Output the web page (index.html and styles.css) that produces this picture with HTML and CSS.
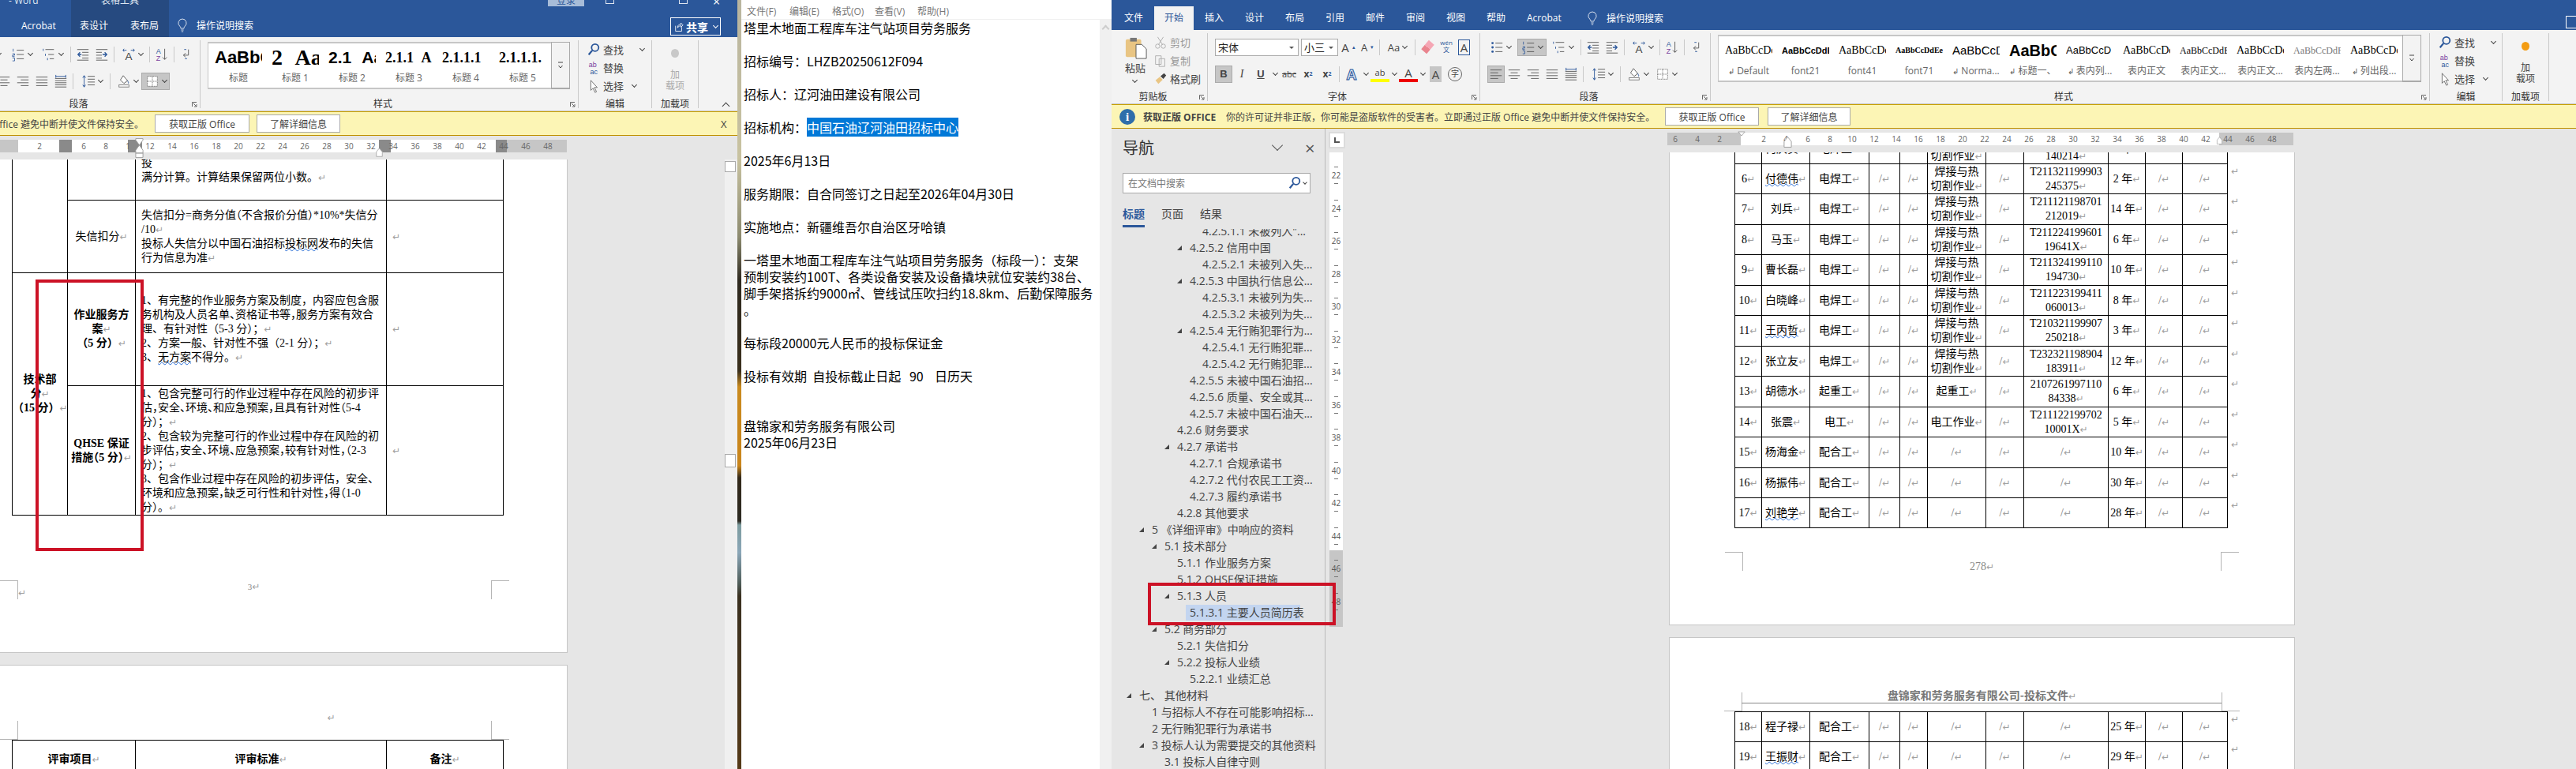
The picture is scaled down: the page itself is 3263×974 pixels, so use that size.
FILE: index.html
```html
<!DOCTYPE html>
<html lang="zh-CN">
<head>
<meta charset="utf-8">
<title>Word 与记事本</title>
<link rel="stylesheet" href="styles.css">
</head>
<body>

<svg class="sprite" xmlns="http://www.w3.org/2000/svg">
  <symbol id="i-bullets" viewBox="0 0 20 20"><g fill="#2b579a"><circle cx="4" cy="4" r="1.6"/><circle cx="4" cy="10" r="1.6"/><circle cx="4" cy="16" r="1.6"/></g><path d="M8 4h10M8 10h10M8 16h10" stroke="#555"/></symbol>
  <symbol id="i-number" viewBox="0 0 20 20"><path d="M3 2v4M2 9h3v2H2v2h3M2 15h3v4H2" stroke="#2b579a" fill="none" stroke-width=".9"/><path d="M8 4h10M8 10h10M8 16h10" stroke="#555"/></symbol>
  <symbol id="i-multi" viewBox="0 0 20 20"><path d="M2 2v3M5 9v3M8 15v3" stroke="#2b579a"/><path d="M5 3h12M9 10h8M11 16h6" stroke="#555"/></symbol>
  <symbol id="i-outdent" viewBox="0 0 20 20"><path d="M2 3h16M9 7h9M9 11h9M9 15h9M2 18h16" stroke="#555"/><path d="M8 10H3m3-3-3 3 3 3" stroke="#2b579a" stroke-width="1.4" fill="none"/></symbol>
  <symbol id="i-indent" viewBox="0 0 20 20"><path d="M2 3h16M2 7h8M2 11h8M2 15h8M2 18h16" stroke="#555"/><path d="M11 10h6m-3-3 3 3-3 3" stroke="#2b579a" stroke-width="1.4" fill="none"/></symbol>
  <symbol id="i-cna" viewBox="0 0 20 20"><text x="10" y="18" text-anchor="middle" font-size="15" font-family="Liberation Sans" fill="#444">A</text><path d="M2 4h5M3.500 2 2 4l1.500 2M18 4h-5m3.500-2L18 4l-1.500 2" stroke="#2b579a" fill="none"/></symbol>
  <symbol id="i-sort" viewBox="0 0 20 20"><text x="2" y="9" font-size="10" font-family="Liberation Sans" fill="#2b579a">A</text><text x="2" y="19" font-size="10" font-family="Liberation Sans" fill="#7a3fa0">Z</text><path d="M14 2v15m-3-3 3 3 3-3" stroke="#555" fill="none"/></symbol>
  <symbol id="i-para" viewBox="0 0 20 20"><path d="M13 3v8H6m3-3-3 3 3 3" stroke="#555" fill="none"/><path d="M7 3h3M11 16h-3" stroke="#2b579a"/></symbol>
  <symbol id="i-left" viewBox="0 0 20 20"><path d="M2 4h16M2 8h11M2 12h16M2 16h11" stroke="#555"/></symbol>
  <symbol id="i-center" viewBox="0 0 20 20"><path d="M2 4h16M5 8h10M2 12h16M5 16h10" stroke="#555"/></symbol>
  <symbol id="i-right" viewBox="0 0 20 20"><path d="M2 4h16M7 8h11M2 12h16M7 16h11" stroke="#555"/></symbol>
  <symbol id="i-just" viewBox="0 0 20 20"><path d="M2 4h16M2 8h16M2 12h16M2 16h16" stroke="#555"/></symbol>
  <symbol id="i-dist" viewBox="0 0 20 20"><path d="M2 6h16M2 9h16M2 12h16M2 15h16M2 18h16" stroke="#555"/><path d="M3 1v4M17 1v4M3 3h14" stroke="#2b579a"/></symbol>
  <symbol id="i-spacing" viewBox="0 0 20 20"><path d="M9 3h10M9 7h10M9 11h10M9 15h10" stroke="#555"/><path d="M4 2v16M2 5l2-3 2 3M2 15l2 3 2-3" stroke="#2b579a" fill="none"/></symbol>
  <symbol id="i-shade" viewBox="0 0 20 20"><path d="M9 2l6 7-5 4-5-5z" fill="#fff" stroke="#555"/><path d="M15 9c1 2 2 3 1 4" stroke="#2b579a" fill="none"/><rect x="3" y="15" width="14" height="3" fill="#fff" stroke="#777"/></symbol>
  <symbol id="i-borders" viewBox="0 0 20 20"><path d="M3 3h14v14H3zM10 3v14M3 10h14" stroke="#555" fill="#fff" stroke-dasharray="1 1"/></symbol>
  <symbol id="i-search" viewBox="0 0 20 20"><circle cx="12" cy="7" r="5" fill="none" stroke="#2b579a" stroke-width="2"/><path d="M8 11l-5 6" stroke="#2b579a" stroke-width="2.500"/></symbol>
  <symbol id="i-replace" viewBox="0 0 20 20"><text x="3" y="9" font-size="10" font-family="Liberation Sans" fill="#7a3fa0">ab</text><text x="5" y="19" font-size="10" font-family="Liberation Sans" fill="#2b579a">ac</text></symbol>
  <symbol id="i-select" viewBox="0 0 20 20"><path d="M6 2v14l3-3 3 6 2-1-3-6h4z" fill="#fff" stroke="#666"/></symbol>
  <symbol id="i-paste" viewBox="0 0 30 30"><rect x="1" y="3" width="21" height="24" rx="2" fill="#e9c583"/><rect x="7" y="1" width="9" height="5" fill="#777"/><path d="M15 10h8l6 6v13H15z" fill="#fff" stroke="#555"/></symbol>
  <symbol id="i-cut" viewBox="0 0 20 20"><path d="M6 2l7 11M14 2L7 13" stroke="#aaa" fill="none"/><circle cx="6" cy="15" r="3" fill="none" stroke="#aaa"/><circle cx="14" cy="15" r="3" fill="none" stroke="#aaa"/></symbol>
  <symbol id="i-copy" viewBox="0 0 20 20"><path d="M3 3h8v12H3zM8 7h8v11H8z" fill="#f3f3f3" stroke="#aaa"/></symbol>
  <symbol id="i-brush" viewBox="0 0 20 20"><path d="M3 12l6-5 4 4-6 6z" fill="#e9c583"/><path d="M10 6l5-4 3 3-4 5z" fill="#444"/></symbol>
  <symbol id="i-bulb" viewBox="0 0 20 24"><path d="M10 2a6.500 6.500 0 0 0-4 11.500c1 1 1.500 2.500 1.500 3.500h5c0-1 .5-2.500 1.500-3.500A6.500 6.500 0 0 0 10 2zM8 19.500h4M8.500 22h3" fill="none" stroke="#fff"/></symbol>
  <symbol id="i-share" viewBox="0 0 14 16"><path d="M2 7v8h9V9" fill="none" stroke="#fff"/><path d="M5 10c0-4 2-5 5-5V3l3 3-3 3V7c-2 0-4 1-5 3z" fill="none" stroke="#fff"/></symbol>
  <symbol id="i-launch" viewBox="0 0 8 8"><path d="M.5 6V.5H6M2 2l4 4M3 6h3V3" fill="none" stroke="#666"/></symbol>
  <symbol id="i-more" viewBox="0 0 10 12"><path d="M2 2h6M2.500 6l2.500 3 2.500-3" fill="none" stroke="#444"/></symbol>
  <symbol id="i-mark1" viewBox="0 0 12 28"><path d="M1 1h10v2L6 10 1 3zM6 10l5 7v4H1v-4zM1 21h10v6H1z" fill="#fff" stroke="#999"/></symbol>
  <symbol id="i-mark2" viewBox="0 0 12 16"><path d="M6 1l5 6v8H1V7z" fill="#fff" stroke="#999"/></symbol>
  <symbol id="i-mark3" viewBox="0 0 12 8"><path d="M1 1h10L6 7z" fill="#fff" stroke="#999"/></symbol>
</svg>

<!-- 左边的 Word -->
<section class="win win-left">
  <div class="titlebar tb-left">
    <span class="tb-name">- Word</span>
    <span class="tb-tool">表格工具</span>
    <span class="tb-login">登录</span>
    <span class="tb-btn tb-b1"></span>
    <span class="tb-btn tb-b2"></span>
    <span class="tb-x">×</span>
  </div>
  <div class="tabs tabs-left">
    <span class="tab tab-acro">Acrobat</span>
    <span class="tool-tabs"><span class="tab">表设计</span><span class="tab">表布局</span></span>
    <svg class="bulb"><use href="#i-bulb"/></svg>
    <span class="tab-search">操作说明搜索</span>
    <span class="share"><svg class="share-ico"><use href="#i-share"/></svg><b>共享</b><i class="chev chev-w"></i></span>
  </div>

  <div class="ribbon">
    <div class="group g-para g-para-left">
      <div class="row1">
        <span class="t w44"><svg class="ico"><use href="#i-bullets"/></svg><i class="chev"></i></span>
        <span class="t w37"><svg class="ico"><use href="#i-number"/></svg><i class="chev"></i></span>
        <span class="t w40"><svg class="ico"><use href="#i-multi"/></svg><i class="chev"></i></span>
        <i class="sep"></i>
        <span class="t w24"><svg class="ico"><use href="#i-outdent"/></svg></span>
        <span class="t w24"><svg class="ico"><use href="#i-indent"/></svg></span>
        <i class="sep"></i>
        <span class="t w38"><svg class="ico"><use href="#i-cna"/></svg><i class="chev"></i></span>
        <i class="sep"></i>
        <span class="t w24"><svg class="ico"><use href="#i-sort"/></svg></span>
        <i class="sep"></i>
        <span class="t w24"><svg class="ico"><use href="#i-para"/></svg></span>
      </div>
      <div class="row2">
        <span class="t w22"><svg class="ico"><use href="#i-left"/></svg></span>
        <span class="t w24"><svg class="ico"><use href="#i-center"/></svg></span>
        <span class="t w24"><svg class="ico"><use href="#i-right"/></svg></span>
        <span class="t w24"><svg class="ico"><use href="#i-just"/></svg></span>
        <span class="t w24"><svg class="ico"><use href="#i-dist"/></svg></span>
        <i class="sep"></i>
        <span class="t w40"><svg class="ico"><use href="#i-spacing"/></svg><i class="chev"></i></span>
        <i class="sep"></i>
        <span class="t w36"><svg class="ico"><use href="#i-shade"/></svg><i class="chev"></i></span>
        <span class="t w36 on"><svg class="ico"><use href="#i-borders"/></svg><i class="chev"></i></span>
      </div>
      <span class="g-label">段落</span>
      <svg class="launch"><use href="#i-launch"/></svg>
    </div>

    <div class="group g-styles g-styles-left">
      <div class="gallery">
        <div class="style"><span class="smp s-h0">AaBbC</span><span class="style-name">标题</span></div>
        <div class="style"><span class="smp s-h1">2 Aa</span><span class="style-name">标题 1</span></div>
        <div class="style"><span class="smp s-h2">2.1 Aa</span><span class="style-name">标题 2</span></div>
        <div class="style"><span class="smp s-h3">2.1.1 A</span><span class="style-name">标题 3</span></div>
        <div class="style"><span class="smp s-h4">2.1.1.1</span><span class="style-name">标题 4</span></div>
        <div class="style"><span class="smp s-h4">2.1.1.1.</span><span class="style-name">标题 5</span></div>
        <div class="gal-more"><svg class="more"><use href="#i-more"/></svg></div>
      </div>
      <span class="g-label">样式</span>
      <svg class="launch"><use href="#i-launch"/></svg>
    </div>

    <div class="group g-edit">
      <div class="ed"><svg class="ico"><use href="#i-search"/></svg><span>查找</span><i class="chev chev-far"></i></div>
      <div class="ed"><svg class="ico"><use href="#i-replace"/></svg><span>替换</span></div>
      <div class="ed"><svg class="ico"><use href="#i-select"/></svg><span>选择</span><i class="chev chev-near"></i></div>
      <span class="g-label">编辑</span>
    </div>

    <div class="group g-addin addin-off">
      <i class="dot"></i>
      <span class="addin-t">加<br>载项</span>
      <span class="g-label">加载项</span>
    </div>
    <i class="collapse"></i>
  </div>

  <div class="banner">
    <div class="banner-cut"><span>Office 避免中断并使文件保持安全。</span></div>
    <span class="bn-btn bn-b1">获取正版 Office</span>
    <span class="bn-btn bn-b2">了解详细信息</span>
    <span class="bn-x">X</span>
  </div>

  <div class="work-left">
    <div class="doc-left">
      <div class="ruler ruler-left">
        <span class="rn">2</span><span class="rn"></span><span class="rn">6</span><span class="rn">8</span><span class="rn">1</span><span class="rn">12</span><span class="rn">14</span><span class="rn">16</span><span class="rn">18</span><span class="rn">20</span><span class="rn">22</span><span class="rn">24</span><span class="rn">26</span><span class="rn">28</span><span class="rn">30</span><span class="rn">32</span><span class="rn">34</span><span class="rn">36</span><span class="rn">38</span><span class="rn">40</span><span class="rn">42</span><span class="rn">44</span><span class="rn">46</span><span class="rn">48</span>
        <svg class="mk mk-l1"><use href="#i-mark1"/></svg>
        <svg class="mk mk-l2"><use href="#i-mark2"/></svg>
      </div>
      <div class="page lp1">
        <table class="score">
          <colgroup><col class="sc1"><col class="sc2"><col class="sc3"><col class="sc4"></colgroup>
          <tr class="sr1">
            <td rowspan="2" class="none"></td>
            <td class="none"></td>
            <td class="txt top">投<br>满分计算。计算结果保留两位小数。</td>
            <td class="none"></td>
          </tr>
          <tr class="sr2">
            <td class="mid">失信扣分</td>
            <td class="txt"><span class="tight">失信扣分=商务分值（不含报价分值）*10%*失信分</span><br>/10<span class="inl"></span><br>投标人失信分以中国石油招标<span class="wavy">投标网</span>发布的失信<br>行为信息为准</td>
            <td class="txt"></td>
          </tr>
          <tr class="sr3">
            <td rowspan="2" class="mid bold">技术部<br>分<span class="inl"></span><br>（15 分）</td>
            <td class="mid bold">作业服务方<br>案<span class="inl"></span><br>（5 分）</td>
            <td class="txt">1、有完整的作业服务方案及制度，内容应包含服<br><span class="tight">务机构及人员名单、资格证书等，服务方案有效合</span><br>理、有针对性（5-3 分）；<span class="inl"></span><br>2、方案一般、针对性不强（2-1 分）；<span class="inl"></span><br>3、<span class="wavy">无方案</span>不得分。</td>
            <td class="txt"></td>
          </tr>
          <tr class="sr4">
            <td class="mid bold">QHSE 保证<br><span class="tight">措施（5 分）</span></td>
            <td class="txt">1、包含完整可行的作业过程中存在风险的初步评<br><span class="tight">估，安全、环境、和应急预案，且具有针对性（5-4</span><br>分）；<span class="inl"></span><br>2、包含较为完整可行的作业过程中存在风险的初<br><span class="tight">步评估，安全、环境、应急预案，较有针对性，（2-3</span><br>分）；<span class="inl"></span><br>3、包含作业过程中存在风险的初步评估，安全、<br><span class="tight">环境和应急预案，缺乏可行性和针对性，得（1-0</span><br>分）。</td>
            <td class="txt"></td>
          </tr>
        </table>
        <div class="foot foot-left">
          <i class="crop crop-bl"></i><span class="ret"></span>
          <span class="foot-no">3<span class="inl"></span></span>
          <i class="crop crop-br"></i>
        </div>
      </div>
      <div class="page lp2">
        <div class="head head-left">
          <i class="crop crop-tl"></i>
          <span class="head-ret"><span class="inl"></span></span>
          <i class="crop crop-tr"></i>
        </div>
        <table class="score score2">
          <colgroup><col class="sc12"><col class="sc3"><col class="sc4"></colgroup>
          <tr class="sr5"><td class="mid bold">评审项目</td><td class="mid bold">评审标准</td><td class="mid bold">备注</td></tr>
        </table>
      </div>
    </div>
    <div class="vscroll">
      <span class="vs-up"></span>
      <span class="vs-thumb"></span>
    </div>
  </div>
  <div class="redbox red-left"></div>
</section>

<div class="wallpaper"></div>

<!-- 记事本 -->
<section class="notepad">
  <div class="np-menu"><span>文件(F)</span><span>编辑(E)</span><span>格式(O)</span><span>查看(V)</span><span>帮助(H)</span></div>
  <div class="np-body">
<pre class="np-text">塔里木地面工程库车注气站项目劳务服务

招标编号：LHZB20250612F094

招标人：辽河油田建设有限公司

招标机构：<span class="np-sel">中国石油辽河油田招标中心</span>

2025年6月13日

服务期限：自合同签订之日起至2026年04月30日

实施地点：新疆维吾尔自治区牙哈镇

一塔里木地面工程库车注气站项目劳务服务（标段一）：支架
预制安装约100T、各类设备安装及设备撬块就位安装约38台、
脚手架搭拆约9000㎡、管线试压吹扫约18.8km、后勤保障服务
。

每标段20000元人民币的投标保证金

投标有效期  自投标截止日起   90    日历天


盘锦家和劳务服务有限公司
2025年06月23日</pre>
    <div class="np-scroll"><i class="np-up"></i></div>
  </div>
</section>

<!-- 右边的 Word -->
<section class="win win-right">
  <div class="titlebar tb-right"></div>
  <div class="tabs tabs-right">
    <span class="tab">文件</span><span class="tab tab-on">开始</span><span class="tab">插入</span><span class="tab">设计</span><span class="tab">布局</span><span class="tab">引用</span><span class="tab">邮件</span><span class="tab">审阅</span><span class="tab">视图</span><span class="tab">帮助</span><span class="tab tab-acro2">Acrobat</span>
    <svg class="bulb bulb-r"><use href="#i-bulb"/></svg>
    <span class="tab-search">操作说明搜索</span>
    <span class="share-cut"></span>
  </div>

  <div class="ribbon">
    <div class="group g-clip">
      <div class="clip-big">
        <svg class="paste"><use href="#i-paste"/></svg>
        <span class="clip-t">粘贴</span>
        <i class="chev"></i>
      </div>
      <div class="clip-col">
        <div class="clip-r off"><svg class="ico"><use href="#i-cut"/></svg>剪切</div>
        <div class="clip-r off"><svg class="ico"><use href="#i-copy"/></svg>复制</div>
        <div class="clip-r"><svg class="ico"><use href="#i-brush"/></svg>格式刷</div>
      </div>
      <span class="g-label">剪贴板</span>
      <svg class="launch"><use href="#i-launch"/></svg>
    </div>

    <div class="group g-font">
      <div class="row1">
        <span class="combo c-font">宋体<i class="tri"></i></span>
        <span class="combo c-size">小三<i class="tri"></i></span>
        <span class="t w24 f-big">A<sup class="up">▴</sup></span>
        <span class="t w24 f-mid">A<sup class="up">▾</sup></span>
        <i class="sep"></i>
        <span class="t w38 f-mid">Aa<i class="chev"></i></span>
        <i class="sep"></i>
        <span class="t w24"><i class="eraser"></i></span>
        <span class="t w24 f-wen">wén<br>文</span>
        <span class="f-box">A</span>
      </div>
      <div class="row2">
        <span class="t w22 on f-b">B</span>
        <span class="t w24 f-i">I</span>
        <span class="t w24 f-u">U</span>
        <span class="t w12"><i class="chev"></i></span>
        <span class="t w24 f-abc">abc</span>
        <span class="t w24 f-x">x<sub>2</sub></span>
        <span class="t w24 f-x">x<sup>2</sup></span>
        <i class="sep"></i>
        <span class="t w24 f-out">A</span>
        <span class="t w12"><i class="chev"></i></span>
        <span class="t w24 f-hl">ab</span>
        <span class="t w12"><i class="chev"></i></span>
        <span class="t w24 f-col">A</span>
        <span class="t w12"><i class="chev"></i></span>
        <span class="f-shade">A</span>
        <span class="f-circ">字</span>
      </div>
      <span class="g-label">字体</span>
      <svg class="launch"><use href="#i-launch"/></svg>
    </div>

    <div class="group g-para">
      <div class="row1">
        <span class="t w44"><svg class="ico"><use href="#i-bullets"/></svg><i class="chev"></i></span>
        <span class="t w37 on"><svg class="ico"><use href="#i-number"/></svg><i class="chev"></i></span>
        <span class="t w40"><svg class="ico"><use href="#i-multi"/></svg><i class="chev"></i></span>
        <i class="sep"></i>
        <span class="t w24"><svg class="ico"><use href="#i-outdent"/></svg></span>
        <span class="t w24"><svg class="ico"><use href="#i-indent"/></svg></span>
        <i class="sep"></i>
        <span class="t w38"><svg class="ico"><use href="#i-cna"/></svg><i class="chev"></i></span>
        <i class="sep"></i>
        <span class="t w24"><svg class="ico"><use href="#i-sort"/></svg></span>
        <i class="sep"></i>
        <span class="t w24"><svg class="ico"><use href="#i-para"/></svg></span>
      </div>
      <div class="row2">
        <span class="t w22 on"><svg class="ico"><use href="#i-left"/></svg></span>
        <span class="t w24"><svg class="ico"><use href="#i-center"/></svg></span>
        <span class="t w24"><svg class="ico"><use href="#i-right"/></svg></span>
        <span class="t w24"><svg class="ico"><use href="#i-just"/></svg></span>
        <span class="t w24"><svg class="ico"><use href="#i-dist"/></svg></span>
        <i class="sep"></i>
        <span class="t w40"><svg class="ico"><use href="#i-spacing"/></svg><i class="chev"></i></span>
        <i class="sep"></i>
        <span class="t w36"><svg class="ico"><use href="#i-shade"/></svg><i class="chev"></i></span>
        <span class="t w36"><svg class="ico"><use href="#i-borders"/></svg><i class="chev"></i></span>
      </div>
      <span class="g-label">段落</span>
      <svg class="launch"><use href="#i-launch"/></svg>
    </div>

    <div class="group g-styles g-styles-right">
      <div class="gallery">
        <div class="style"><span class="smp s-serif">AaBbCcDc</span><span class="style-name"><i class="pil">↲</i> Default</span></div>
        <div class="style"><span class="smp s-b11">AaBbCcDdE</span><span class="style-name">font21</span></div>
        <div class="style"><span class="smp s-serif">AaBbCcDc</span><span class="style-name">font41</span></div>
        <div class="style"><span class="smp s-b10">AaBbCcDdEe</span><span class="style-name">font71</span></div>
        <div class="style"><span class="smp s-san">AaBbCcD</span><span class="style-name"><i class="pil">↲</i> Norma...</span></div>
        <div class="style"><span class="smp s-big">AaBbCc</span><span class="style-name"><i class="pil">↲</i> 标题一、</span></div>
        <div class="style"><span class="smp s-san2">AaBbCcD</span><span class="style-name"><i class="pil">↲</i> 表内列...</span></div>
        <div class="style"><span class="smp s-serif">AaBbCcDc</span><span class="style-name">表内正文</span></div>
        <div class="style"><span class="smp s-ser12">AaBbCcDdE</span><span class="style-name">表内正文...</span></div>
        <div class="style"><span class="smp s-serif">AaBbCcDc</span><span class="style-name">表内正文...</span></div>
        <div class="style"><span class="smp s-ser12 s-gray">AaBbCcDdF</span><span class="style-name">表内左两...</span></div>
        <div class="style"><span class="smp s-serif">AaBbCcDc</span><span class="style-name"><i class="pil">↲</i> 列出段...</span></div>
        <div class="gal-more"><svg class="more"><use href="#i-more"/></svg></div>
      </div>
      <span class="g-label">样式</span>
      <svg class="launch"><use href="#i-launch"/></svg>
    </div>

    <div class="group g-edit">
      <div class="ed"><svg class="ico"><use href="#i-search"/></svg><span>查找</span><i class="chev chev-far"></i></div>
      <div class="ed"><svg class="ico"><use href="#i-replace"/></svg><span>替换</span></div>
      <div class="ed"><svg class="ico"><use href="#i-select"/></svg><span>选择</span><i class="chev chev-near"></i></div>
      <span class="g-label">编辑</span>
    </div>

    <div class="group g-addin">
      <i class="dot"></i>
      <span class="addin-t">加<br>载项</span>
      <span class="g-label">加载项</span>
    </div>
  </div>

  <div class="banner banner-right">
    <span class="bn-info">i</span>
    <b class="bn-title">获取正版 OFFICE</b>
    <span class="bn-msg">你的许可证并非正版，你可能是盗版软件的受害者。立即通过正版 Office 避免中断并使文件保持安全。</span>
    <span class="bn-btn bn-r1">获取正版 Office</span>
    <span class="bn-btn bn-r2">了解详细信息</span>
  </div>

  <div class="work-right">
    <aside class="nav">
      <div class="nav-head"><span class="nav-title">导航</span><i class="nav-chev"></i><span class="nav-x">×</span></div>
      <div class="nav-search"><span>在文档中搜索</span><svg class="ico nav-ico"><use href="#i-search"/></svg><i class="chev"></i></div>
      <div class="nav-tabs"><span class="nav-on">标题</span><span>页面</span><span>结果</span></div>
      <ul class="tree">
        <li class="l5">4.2.5.1.1 未被列入"...</li>
        <li class="l4 open">4.2.5.2 信用中国</li>
        <li class="l5">4.2.5.2.1 未被列入失...</li>
        <li class="l4 open">4.2.5.3 中国执行信息公...</li>
        <li class="l5">4.2.5.3.1 未被列为失...</li>
        <li class="l5">4.2.5.3.2 未被列为失...</li>
        <li class="l4 open">4.2.5.4 无行贿犯罪行为...</li>
        <li class="l5">4.2.5.4.1 无行贿犯罪...</li>
        <li class="l5">4.2.5.4.2 无行贿犯罪...</li>
        <li class="l4">4.2.5.5 未被中国石油招...</li>
        <li class="l4">4.2.5.6 质量、安全或其...</li>
        <li class="l4">4.2.5.7 未被中国石油天...</li>
        <li class="l3">4.2.6 财务要求</li>
        <li class="l3 open">4.2.7 承诺书</li>
        <li class="l4">4.2.7.1 合规承诺书</li>
        <li class="l4">4.2.7.2 代付农民工工资...</li>
        <li class="l4">4.2.7.3 履约承诺书</li>
        <li class="l3">4.2.8 其他要求</li>
        <li class="l1 open">5 《详细评审》中响应的资料</li>
        <li class="l2 open">5.1 技术部分</li>
        <li class="l3">5.1.1 作业服务方案</li>
        <li class="l3">5.1.2 QHSE保证措施</li>
        <li class="l3 open">5.1.3 人员</li>
        <li class="l4"><span class="tree-cur">5.1.3.1 主要人员简历表</span></li>
        <li class="l2 open">5.2 商务部分</li>
        <li class="l3">5.2.1 失信扣分</li>
        <li class="l3 open">5.2.2 投标人业绩</li>
        <li class="l4">5.2.2.1 业绩汇总</li>
        <li class="l0 open">七、 其他材料</li>
        <li class="l1">1 与招标人不存在可能影响招标...</li>
        <li class="l1">2 无行贿犯罪行为承诺书</li>
        <li class="l1 open">3 投标人认为需要提交的其他资料</li>
        <li class="l2">3.1 投标人自律守则</li>
      </ul>
    </aside>

    <div class="vruler">
      <span class="vr-tab"><i></i></span>
      <div class="vr-white">
        <span class="vn">22</span><span class="vn">24</span><span class="vn">26</span><span class="vn">28</span><span class="vn">30</span><span class="vn">32</span><span class="vn">34</span><span class="vn">36</span><span class="vn">38</span><span class="vn">40</span><span class="vn">42</span><span class="vn">44</span>
      </div>
      <div class="vr-grey"><span class="vn">46</span><span class="vn">48</span></div>
    </div>

    <div class="doc-right">
      <div class="ruler ruler-right">
        <span class="rn rn-first">6</span><span class="rn">4</span><span class="rn">2</span><span class="rn"></span><span class="rn">2</span><span class="rn">4</span><span class="rn">6</span><span class="rn">8</span><span class="rn">10</span><span class="rn">12</span><span class="rn">14</span><span class="rn">16</span><span class="rn">18</span><span class="rn">20</span><span class="rn">22</span><span class="rn">24</span><span class="rn">26</span><span class="rn">28</span><span class="rn">30</span><span class="rn">32</span><span class="rn">34</span><span class="rn">36</span><span class="rn">38</span><span class="rn">40</span><span class="rn">42</span><span class="rn">44</span><span class="rn">46</span><span class="rn">48</span>
        <svg class="mk mk-r0"><use href="#i-mark3"/></svg>
        <svg class="mk mk-r1"><use href="#i-mark2"/></svg>
        <svg class="mk mk-r2"><use href="#i-mark2"/></svg>
      </div>

      <div class="page rp1">
        <table class="staff staff-first">
          <colgroup><col class="k1"><col class="k2"><col class="k3"><col class="k4"><col class="k5"><col class="k6"><col class="k7"><col class="k8"><col class="k9"><col class="k10"><col class="k11"></colgroup>
          <tr><td>5</td><td>何庆贵</td><td>电焊工</td><td class="na">/</td><td class="na">/</td><td>焊接与热<br>切割作业</td><td class="na">/</td><td>T211321198902<br>140214</td><td>4 年</td><td class="na">/</td><td class="na">/</td></tr>
          <tr><td>6</td><td><span class="wavy">付德伟</span></td><td>电焊工</td><td class="na">/</td><td class="na">/</td><td>焊接与热<br>切割作业</td><td class="na">/</td><td>T211321199903<br>245375</td><td>2 年</td><td class="na">/</td><td class="na">/</td></tr>
          <tr><td>7</td><td>刘兵</td><td>电焊工</td><td class="na">/</td><td class="na">/</td><td>焊接与热<br>切割作业</td><td class="na">/</td><td>T211121198701<br>212019</td><td>14 年</td><td class="na">/</td><td class="na">/</td></tr>
          <tr><td>8</td><td>马玉</td><td>电焊工</td><td class="na">/</td><td class="na">/</td><td>焊接与热<br>切割作业</td><td class="na">/</td><td>T211224199601<br>19641X</td><td>6 年</td><td class="na">/</td><td class="na">/</td></tr>
          <tr><td>9</td><td>曹长磊</td><td>电焊工</td><td class="na">/</td><td class="na">/</td><td>焊接与热<br>切割作业</td><td class="na">/</td><td>T211324199110<br>194730</td><td>10 年</td><td class="na">/</td><td class="na">/</td></tr>
          <tr><td>10</td><td>白晓峰</td><td>电焊工</td><td class="na">/</td><td class="na">/</td><td>焊接与热<br>切割作业</td><td class="na">/</td><td>T211223199411<br>060013</td><td>8 年</td><td class="na">/</td><td class="na">/</td></tr>
          <tr><td>11</td><td><span class="wavy">王丙哲</span></td><td>电焊工</td><td class="na">/</td><td class="na">/</td><td>焊接与热<br>切割作业</td><td class="na">/</td><td>T210321199907<br>250218</td><td>3 年</td><td class="na">/</td><td class="na">/</td></tr>
          <tr><td>12</td><td>张立友</td><td>电焊工</td><td class="na">/</td><td class="na">/</td><td>焊接与热<br>切割作业</td><td class="na">/</td><td>T232321198904<br>183911</td><td>12 年</td><td class="na">/</td><td class="na">/</td></tr>
          <tr><td>13</td><td>胡德水</td><td>起重工</td><td class="na">/</td><td class="na">/</td><td>起重工</td><td class="na">/</td><td>2107261997110<br>84338</td><td>6 年</td><td class="na">/</td><td class="na">/</td></tr>
          <tr><td>14</td><td>张震</td><td>电工</td><td class="na">/</td><td class="na">/</td><td>电工作业</td><td class="na">/</td><td>T211122199702<br>10001X</td><td>5 年</td><td class="na">/</td><td class="na">/</td></tr>
          <tr><td>15</td><td>杨海金</td><td>配合工</td><td class="na">/</td><td class="na">/</td><td class="na">/</td><td class="na">/</td><td class="na">/</td><td>10 年</td><td class="na">/</td><td class="na">/</td></tr>
          <tr><td>16</td><td>杨振伟</td><td>配合工</td><td class="na">/</td><td class="na">/</td><td class="na">/</td><td class="na">/</td><td class="na">/</td><td>30 年</td><td class="na">/</td><td class="na">/</td></tr>
          <tr><td>17</td><td><span class="wavy">刘艳学</span></td><td>配合工</td><td class="na">/</td><td class="na">/</td><td class="na">/</td><td class="na">/</td><td class="na">/</td><td>28 年</td><td class="na">/</td><td class="na">/</td></tr>
        </table>
        <div class="foot foot-right">
          <i class="crop crop-bl"></i>
          <span class="foot-no">278<span class="inl"></span></span>
          <i class="crop crop-br"></i>
        </div>
      </div>

      <div class="page rp2">
        <div class="head head-right">
          <i class="crop crop-tl"></i>
          <span class="head-title">盘锦家和劳务服务有限公司-投标文件<span class="inl"></span></span>
          <i class="crop crop-tr"></i>
        </div>
        <table class="staff">
          <colgroup><col class="k1"><col class="k2"><col class="k3"><col class="k4"><col class="k5"><col class="k6"><col class="k7"><col class="k8"><col class="k9"><col class="k10"><col class="k11"></colgroup>
          <tr><td>18</td><td>程子禄</td><td>配合工</td><td class="na">/</td><td class="na">/</td><td class="na">/</td><td class="na">/</td><td class="na">/</td><td>25 年</td><td class="na">/</td><td class="na">/</td></tr>
          <tr><td>19</td><td><span class="wavy">王振财</span></td><td>配合工</td><td class="na">/</td><td class="na">/</td><td class="na">/</td><td class="na">/</td><td class="na">/</td><td>29 年</td><td class="na">/</td><td class="na">/</td></tr>
        </table>
      </div>
    </div>
  </div>
  <div class="redbox red-right"></div>
</section>

</body>
</html>
```

FILE: styles.css
```css
/* 整个桌面 */
html, body { margin: 0; padding: 0; }
body { width: 3263px; height: 974px; display: flex; overflow: hidden; background: #fff; font-family: "Open Sans", "Noto Sans CJK SC", sans-serif; font-size: 12px; color: #444; }
.sprite { position: absolute; width: 0; height: 0; }
i { font-style: normal; }

.win { position: relative; height: 974px; overflow: hidden; background: #e6e6e6; flex: none; }
.win-left { width: 934px; }
.win-right { width: 1855px; }
.wallpaper { width: 5px; flex: none; background: linear-gradient(#b9b59f 0, #c8c2a0 200px, #8d8b70 300px, #2f2a20 355px, #3a2f1c 470px, #c98a1e 490px, #c9851c 590px, #33291a 605px, #2c2a22 660px, #7d9c9f 665px, #8aa6b8 700px, #4d5a55 740px, #3a3020 755px, #553a18 974px); }

/* 标题栏和选项卡 */
.titlebar { background: #2b579a; display: flex; overflow: hidden; color: #dfe6f1; }
.tb-left { height: 17px; }
.tb-right { height: 8px; }
.tb-name { margin: -8px 0 0 11px; width: 79px; line-height: 18px; }
.tb-tool { width: 124px; background: #264a80; text-align: center; margin-top: 0; line-height: 2px; height: 17px; }
.tb-login { margin-left: 480px; width: 46px; height: 8px; background: #a7bcd8; color: #2b579a; text-align: center; line-height: 2px; }
.tb-btn { border: 1px solid #dfe6f1; width: 9px; height: 4px; border-top: 0; }
.tb-b1 { margin-left: 27px; }
.tb-b2 { margin-left: 82px; }
.tb-x { margin-left: 32px; line-height: 4px; color: #fff; font-size: 16px; }

.tabs { height: 30px; background: #2b579a; display: flex; align-items: center; color: #fff; white-space: nowrap; }
.tabs-left { padding-left: 27px; }
.tab-acro { width: 63px; }
.tool-tabs { background: #264a80; display: flex; width: 124px; height: 30px; align-items: center; padding-left: 11px; box-sizing: border-box; gap: 28px; }
.bulb { width: 16px; height: 20px; margin-left: 9px; flex: none; }
.tab-search { margin-left: 10px; }
.share { margin-left: 528px; width: 64px; height: 23px; border: 1px solid #fff; box-sizing: border-box; display: flex; align-items: center; font-size: 14px; margin-top: 3px; }
.share b { margin-left: 3px; }
.share-ico { width: 12px; height: 15px; margin-left: 4px; }
.tabs-right { padding-left: 16px; }
.tabs-right .tab { width: 51px; height: 30px; line-height: 30px; box-sizing: border-box; }
.tabs-right .tab-on { background: #f3f3f3; color: #2b579a; text-align: center; width: 50px; margin: 0 14px 0 -13px; }
.tabs-right .tab-acro2 { width: 64px; }
.bulb-r { margin-left: 11px; }
.share-cut { margin: 10px -9px 0 auto; width: 20px; height: 14px; border: 1px solid #fff; flex: none; }

/* 功能区 */
.ribbon { height: 94px; background: #f3f3f3; display: flex; border-bottom: 1px solid #c6c6c6; box-sizing: border-box; position: relative; overflow: hidden; }
.group { position: relative; height: 86px; margin-top: 4px; border-right: 1px solid #c9c9c9; box-sizing: border-box; flex: none; }
.g-label { position: absolute; left: 0; right: 0; bottom: -3px; text-align: center; line-height: 16px; color: #333; }
.g-para .g-label, .g-font .g-label, .g-styles .g-label, .g-clip .g-label { right: 16px; }
.launch { position: absolute; right: 2px; bottom: 0; width: 8px; height: 8px; }
.ico { width: 18px; height: 18px; flex: none; }
.row1, .row2 { display: flex; align-items: center; height: 23px; white-space: nowrap; }
.row1 { margin-top: 6px; margin-left: 3px; }
.row2 { margin-top: 11px; margin-left: 9px; }
.t { display: flex; align-items: center; justify-content: center; height: 22px; flex: none; gap: 4px; box-sizing: border-box; }
.t.on { background: #c6c6c6; border: 1px solid #ababab; }
.w12 { width: 12px; }
.w22 { width: 22px; }
.w24 { width: 24px; }
.w36 { width: 36px; }
.w37 { width: 37px; }
.w38 { width: 38px; }
.w40 { width: 40px; }
.w44 { width: 44px; }
.sep { width: 1px; height: 20px; background: #c9c9c9; margin: 0 3px; flex: none; }
.chev { display: block; width: 4px; height: 4px; border-right: 1px solid #444; border-bottom: 1px solid #444; transform: rotate(45deg); margin-top: -3px; flex: none; }
.chev-w { border-color: #fff; margin-left: 7px; }
.chev-far { margin-left: 18px; }
.chev-near { margin-left: 8px; }

.g-para { width: 292px; }
.g-para-left { margin-left: -38px; }
.g-styles-left { width: 479px; }
.g-styles-right { width: 911px; }
.gallery { display: flex; background: #fff; border: 1px solid #c6c6c6; border-width: 2px 1px 2px 1px; height: 60px; box-sizing: border-box; margin-left: 9px; padding-left: 2px; }
.g-styles-left .gallery { width: 459px; margin-top: 2px; }
.g-styles-right .gallery { width: 891px; margin-top: 2px; }
.style { width: 72px; overflow: hidden; flex: none; text-align: center; white-space: nowrap; }
.smp { display: block; height: 36px; line-height: 36px; color: #000; overflow: hidden; margin: 0 6px; text-align: left; font-family: "Liberation Sans", sans-serif; }
.style-name { display: block; color: #666; line-height: 16px; }
.pil { font-size: 10px; }
.s-h0 { font-size: 22px; font-weight: bold; }
.s-h1 { font-size: 28px; font-weight: bold; font-family: "Liberation Serif", serif; word-spacing: 10px; }
.s-h2 { font-size: 21px; font-weight: bold; word-spacing: 8px; }
.s-h3 { font-size: 18px; font-weight: bold; font-family: "Liberation Serif", serif; word-spacing: 6px; }
.s-h4 { font-size: 18px; font-weight: bold; font-family: "Liberation Serif", serif; }
.s-serif { font-size: 14px; font-family: "Liberation Serif", serif; }
.s-b11 { font-size: 11px; font-weight: bold; }
.s-b10 { font-size: 10px; font-weight: bold; font-family: "Liberation Serif", serif; }
.s-san { font-size: 15px; }
.s-san2 { font-size: 13px; }
.s-big { font-size: 20px; font-weight: bold; }
.s-ser12 { font-size: 12px; font-family: "Liberation Serif", serif; }
.s-gray { color: #777; }
.gal-more { flex: 1; border-left: 1px solid #aaa; border-right: 1px solid #aaa; margin: -2px -1px -2px 0; border-top: 1px solid #aaa; border-bottom: 2px solid #aaa; display: flex; align-items: center; justify-content: center; background: #f3f3f3; }
.more { width: 10px; height: 12px; }

.g-edit { width: 93px; padding-left: 10px; }
.win-right .g-edit { width: 92px; }
.ed { display: flex; align-items: center; height: 23px; gap: 3px; font-size: 13px; }
.g-addin { width: 59px; text-align: center; padding-top: 11px; }
.dot { display: block; width: 10px; height: 11px; background: #f39c12; border-radius: 50%; margin: 0 auto; }
.addin-t { display: block; line-height: 14px; margin-top: 15px; }
.addin-off .dot { background: #c8c8c8; }
.addin-off .addin-t { color: #aaa; }
.collapse { display: block; width: 6px; height: 6px; border-left: 1px solid #444; border-top: 1px solid #444; transform: rotate(45deg); margin: 84px 0 0 31px; }

.g-clip { width: 122px; display: flex; padding-left: 16px; }
.clip-big { width: 37px; display: flex; flex-direction: column; align-items: flex-start; padding-top: 5px; }
.paste { width: 30px; height: 28px; }
.clip-t { margin: 3px 0 3px 1px; font-size: 13px; line-height: 16px; }
.clip-big .chev { margin-left: 11px; margin-top: 2px; }
.clip-col { margin-left: 0; }
.clip-r { display: flex; align-items: center; height: 23px; gap: 3px; font-size: 13px; white-space: nowrap; margin-left: 0; }
.clip-r.off { color: #999; }

.g-font { width: 345px; }
.g-font .row1 { margin-left: 9px; }
.combo { height: 22px; border: 1px solid #aaa; background: #fff; box-sizing: border-box; display: flex; align-items: center; padding-left: 3px; font-size: 13px; color: #222; position: relative; flex: none; }
.c-font { width: 106px; margin-right: 3px; }
.c-size { width: 47px; margin-right: 1px; }
.tri { position: absolute; right: 5px; top: 9px; border: 3px solid transparent; border-top-color: #555; }
.f-big { font-size: 15px; }
.f-mid { font-size: 13px; }
.up { color: #2b579a; font-size: 7px; line-height: 1; }
.eraser { display: block; width: 9px; height: 15px; background: linear-gradient(#f5a6b4 55%, #e9848e 55%); transform: rotate(40deg); }
.f-wen { display: block; font-size: 8px; line-height: 9px; text-align: center; color: #2b579a; }
.f-box { width: 15px; height: 20px; border: 1px solid #2b579a; text-align: center; line-height: 18px; font-size: 15px; box-sizing: border-box; margin-left: 3px; }
.f-b { font-weight: bold; font-size: 13px; font-family: "Liberation Sans", sans-serif; }
.f-i { font-style: italic; font-size: 14px; font-family: "Liberation Serif", serif; }
.f-u { text-decoration: underline; font-weight: bold; font-size: 13px; font-family: "Liberation Sans", sans-serif; }
.f-abc { font-size: 11px; text-decoration: line-through; }
.f-x { font-size: 12px; font-weight: bold; gap: 0; }
.f-x sub, .f-x sup { font-size: 7px; color: #2b579a; }
.f-out { font-size: 18px; color: #dce6f4; -webkit-text-stroke: 1px #2b579a; font-weight: bold; }
.f-hl { font-size: 11px; height: 20px; border-bottom: 4px solid #ff0; }
.f-col { font-size: 15px; height: 20px; border-bottom: 4px solid #e00; }
.f-shade { width: 15px; height: 20px; background: #c6c6c6; text-align: center; line-height: 20px; font-size: 15px; flex: none; margin-left: 3px; }
.f-circ { width: 16px; height: 16px; border: 1px solid #666; border-radius: 50%; text-align: center; line-height: 15px; font-size: 10px; flex: none; margin-left: 8px; }

/* 黄色提示条 */
.banner { height: 31px; background: #fcf5b5; border-top: 1px solid #c8a000; border-bottom: 1px solid #bf9000; box-sizing: border-box; display: flex; align-items: center; white-space: nowrap; position: relative; color: #444; }
.banner-cut { width: 182px; overflow: hidden; display: flex; justify-content: flex-end; flex: none; }
.banner-cut span { flex: none; }
.bn-btn { height: 23px; background: #fff; border: 1px solid #aaa; box-sizing: border-box; display: flex; align-items: center; justify-content: center; flex: none; }
.bn-b1 { width: 120px; margin-left: 14px; }
.bn-b2 { width: 106px; margin-left: 9px; }
.bn-x { margin-left: 482px; font-size: 13px; }
.bn-info { width: 20px; height: 20px; border-radius: 50%; background: #2f6eaa; color: #fff; font: bold 15px/20px "Liberation Serif", serif; text-align: center; margin-left: 10px; flex: none; }
.bn-title { margin-left: 10px; width: 105px; }
.bn-msg { width: 556px; flex: none; }
.bn-r1 { width: 119px; }
.bn-r2 { width: 105px; margin-left: 11px; }

/* 标尺 */
.ruler { height: 16px; display: flex; position: relative; font-size: 10px; color: #666; line-height: 16px; }
.rn { width: 28px; flex: none; text-align: center; }
.rn-first { margin-left: -4px; }
.ruler-left { margin: 5px 0 9px; width: 718px; padding-left: 36px; box-sizing: border-box; background: linear-gradient(to right, #c6c6c6 23px, #fff 23px, #fff 75px, #8a8a8a 75px, #8a8a8a 91px, #fff 91px, #fff 162px, #8a8a8a 162px, #8a8a8a 180px, #fff 180px, #fff 480px, #8a8a8a 480px, #8a8a8a 495px, #fff 495px, #fff 628px, #8a8a8a 628px, #8a8a8a 642px, #c6c6c6 642px); }
.ruler-right { margin: 5px 0 9px 408px; width: 793px; background: linear-gradient(to right, #c6c6c6 93px, #fff 93px, #fff 699px, #c6c6c6 699px); }
.mk { position: absolute; }
.mk-l1 { left: 171px; top: -3px; width: 11px; height: 27px; }
.mk-l2 { left: 475px; top: 10px; width: 11px; height: 12px; }
.mk-r0 { left: 89px; top: -2px; width: 10px; height: 7px; }
.mk-r1 { left: 147px; top: 4px; width: 11px; height: 16px; }
.mk-r2 { left: 694px; top: 5px; width: 11px; height: 10px; }

/* 文档页面 */
.work-left { display: flex; height: 802px; }
.doc-left { width: 918px; flex: none; overflow: hidden; }
.vscroll { width: 16px; flex: none; background: #f0f0f0; margin-top: 30px; position: relative; }
.vs-up { position: absolute; left: 0; top: 2px; width: 14px; height: 14px; background: #fff; border: 1px solid #aaa; box-sizing: border-box; }
.vs-thumb { position: absolute; left: 0; top: 373px; width: 14px; height: 17px; background: #fff; border: 1px solid #aaa; box-sizing: border-box; }

.page { background: #fff; border-bottom: 1px solid #c6c6c6; border-right: 1px solid #c6c6c6; box-sizing: border-box; overflow: hidden; }
.lp1 { width: 719px; height: 625px; margin-bottom: 15px; }
.lp2 { width: 719px; height: 200px; border-top: 1px solid #c6c6c6; }
.rp1 { width: 793px; margin-left: 410px; height: 599px; margin-bottom: 15px; border-left: 1px solid #c6c6c6; }
.rp2 { width: 793px; margin-left: 410px; height: 300px; border: 1px solid #c6c6c6; }

table { border-collapse: collapse; table-layout: fixed; color: #000; font-family: "Liberation Serif", "Noto Sans CJK SC", serif; font-size: 14px; line-height: 18px; }
td { border: 1px solid #000; padding: 0; vertical-align: middle; white-space: nowrap; }
td::after, .inl::after { content: "↵"; font: 12px/1 "DejaVu Sans", sans-serif; color: #a0a0a0; }
td.none::after { content: ""; }
.tight { font-feature-settings: "halt"; }

.score { margin-left: 15px; margin-top: -9px; width: 622px; }
.sc1 { width: 70px; }
.sc2 { width: 86px; }
.sc3 { width: 318px; }
.sc4 { width: 148px; }
.sc12 { width: 156px; }
.sr1 { height: 60px; }
.sr2 { height: 92px; }
.sr3 { height: 143px; }
.sr4 { height: 164px; }
.sr5 { height: 48px; }
.score2 { margin-top: 0; }
.mid { text-align: center; }
.bold { font-weight: bold; }
.txt { padding-left: 7px; }
.top { vertical-align: top; padding-top: 4px; }
.wavy { text-decoration: underline wavy #2b6fd6 1px; }

.foot { display: flex; height: 24px; }
.foot-left { margin-top: 82px; padding-right: 73px; }
.foot-right { margin-top: 30px; padding: 0 70px; }
.crop { display: block; flex: none; width: 23px; height: 24px; box-sizing: border-box; border: 0 solid #b5b5b5; }
.crop-bl { border-top-width: 1px; border-right-width: 1px; }
.crop-br { border-top-width: 1px; border-left-width: 1px; }
.crop-tl { border-bottom-width: 1px; border-right-width: 1px; }
.crop-tr { border-bottom-width: 1px; border-left-width: 1px; }
.ret { width: 10px; flex: none; align-self: flex-end; }
.ret::after { content: "↵"; font: 12px/1 "DejaVu Sans", sans-serif; color: #a0a0a0; }
.foot-no { flex: 1; text-align: center; color: #888; font-family: "Liberation Serif", serif; font-size: 14px; line-height: 18px; }
.foot-left .foot-no { line-height: 16px; padding-right: 12px; font-size: 11px; }
.foot-right .foot-no { padding-top: 10px; }
.head { display: flex; align-items: flex-end; }
.head-left { height: 94px; }
.head-left .crop-tr { margin-right: 73px; }
.head-ret { flex: 1; padding-left: 194px; text-align: center; margin-bottom: 22px; line-height: 12px; }
.head-right { height: 93px; padding: 0 69px; box-sizing: content-box; margin-top: 0; }
.head-title { flex: 1; text-align: center; color: #777; font: bold 14px/18px "Noto Sans CJK SC", sans-serif; border-bottom: 1px solid #888; margin: 0 -1px 10px; padding-bottom: 1px; }

.staff { margin-left: 82px; width: 624px; text-align: center; }
.staff-first { margin-top: -24px; }
.k1 { width: 34px; }
.k2 { width: 61px; }
.k3 { width: 75px; }
.k4 { width: 39px; }
.k5 { width: 35px; }
.k6 { width: 74px; }
.k7 { width: 48px; }
.k8 { width: 107px; }
.k9 { width: 47px; }
.k10 { width: 47px; }
.k11 { width: 57px; }
.staff tr { height: 38px; }
.staff tr:nth-child(odd) { height: 39px; }
.staff tr:first-child, .staff tr:last-child { height: 38px; }
.staff td.na { color: #777; font-size: 14px; }
.staff td:last-child { position: relative; }
.staff td:last-child::before { content: "↵"; position: absolute; right: -15px; top: 3px; font: 12px/1 "DejaVu Sans", sans-serif; color: #a0a0a0; }

/* 右边的导航窗格 */
.work-right { display: flex; height: 811px; }
.nav { width: 271px; flex: none; border-right: 1px solid #b9b9b9; box-sizing: border-box; overflow: hidden; }
.nav-head { display: flex; align-items: center; height: 42px; padding: 5px 0 0 14px; box-sizing: border-box; }
.nav-title { font-size: 20px; color: #333; width: 191px; }
.nav-chev { display: block; width: 9px; height: 9px; border-right: 1px solid #555; border-bottom: 1px solid #555; transform: rotate(45deg); margin-top: -6px; }
.nav-x { margin-left: 30px; font-size: 22px; line-height: 20px; color: #555; }
.nav-search { margin: 14px 0 0 14px; width: 238px; height: 26px; border: 1px solid #aaa; background: #fff; box-sizing: border-box; display: flex; align-items: center; padding-left: 6px; color: #777; }
.nav-search span { width: 208px; }
.nav-ico { margin-left: -6px; }
.nav-search .chev { width: 3px; height: 3px; margin-left: 2px; }
.nav-tabs { display: flex; gap: 21px; margin: 15px 0 0 14px; height: 30px; font-size: 14px; line-height: 22px; color: #444; box-sizing: border-box; }
.nav-on { color: #2b579a; font-weight: bold; border-bottom: 3px solid #2b579a; height: 25px; width: 28px; }
.tree { list-style: none; margin: 0; padding: 0; font-size: 14px; height: 700px; overflow: hidden; color: #444; white-space: nowrap; position: relative; }
.tree li { height: 21px; line-height: 21px; }
.tree li:first-child { margin-top: -8.500px; }
.l0 { padding-left: 35px; }
.l1 { padding-left: 51px; }
.l2 { padding-left: 67px; }
.l3 { padding-left: 83px; }
.l4 { padding-left: 99px; }
.l5 { padding-left: 115px; }
.open::before { content: ""; display: inline-block; width: 0; height: 0; border-style: solid; border-width: 0 0 6px 6px; border-color: transparent transparent #444; margin: 0 10px 2px -16px; }
.tree-cur { display: inline-block; background: #c3d5f0; margin-left: -5px; padding-left: 5px; width: 140px; height: 20px; line-height: 20px; }

.vruler { width: 25px; flex: none; display: flex; flex-direction: column; }
.vr-tab { display: flex; align-items: center; justify-content: center; width: 21px; height: 21px; margin: 4px 0 5px 4px; background: #fff; border: 2px solid #dcdcdc; box-sizing: border-box; flex: none; }
.vr-tab i { width: 5px; height: 5px; border-left: 2px solid #555; border-bottom: 2px solid #555; }
.vr-white { width: 17px; height: 504px; margin-left: 5px; background: #fff; padding-top: 8.250px; box-sizing: border-box; overflow: hidden; }
.vr-grey { width: 17px; height: 97px; margin-left: 5px; background: #c6c6c6; padding-top: 2.250px; box-sizing: border-box; overflow: hidden; }
.vn { display: flex; flex-direction: column; align-items: center; justify-content: center; height: 41.500px; font-size: 10px; color: #555; }
.vn::before, .vn::after { content: ""; width: 5px; height: 1px; background: #777; margin: 3px 0; }

.doc-right { flex: 1; overflow: hidden; }

/* 红框标注 */
.redbox { position: absolute; border: 4px solid #cc1226; box-sizing: border-box; }
.red-left { left: 45px; top: 354px; width: 137px; height: 344px; }
.red-right { left: 46px; top: 738px; width: 238px; height: 54px; }

/* 记事本 */
.notepad { width: 469px; flex: none; background: #fff; height: 974px; overflow: hidden; }
.np-menu { height: 24px; display: flex; padding-left: 7px; line-height: 29px; color: #777; gap: 0; border-bottom: 1px solid #f0f0f0; box-sizing: content-box; }
.np-menu span { width: 54px; }
.np-body { display: flex; height: 949px; }
.np-text { margin: 0; padding: 0 0 0 3px; width: 454px; box-sizing: border-box; font: 16px/21px "Noto Sans CJK SC", sans-serif; color: #000; flex: none; overflow: hidden; }
.np-sel { background: #0078d7; color: #fff; }
.np-scroll { width: 15px; background: #f0f0f0; flex: none; padding-top: 6px; box-sizing: border-box; }
.np-up { display: block; width: 5px; height: 5px; border-left: 2px solid #ccc; border-top: 2px solid #ccc; transform: rotate(45deg); margin: 2px auto 0; }
```
